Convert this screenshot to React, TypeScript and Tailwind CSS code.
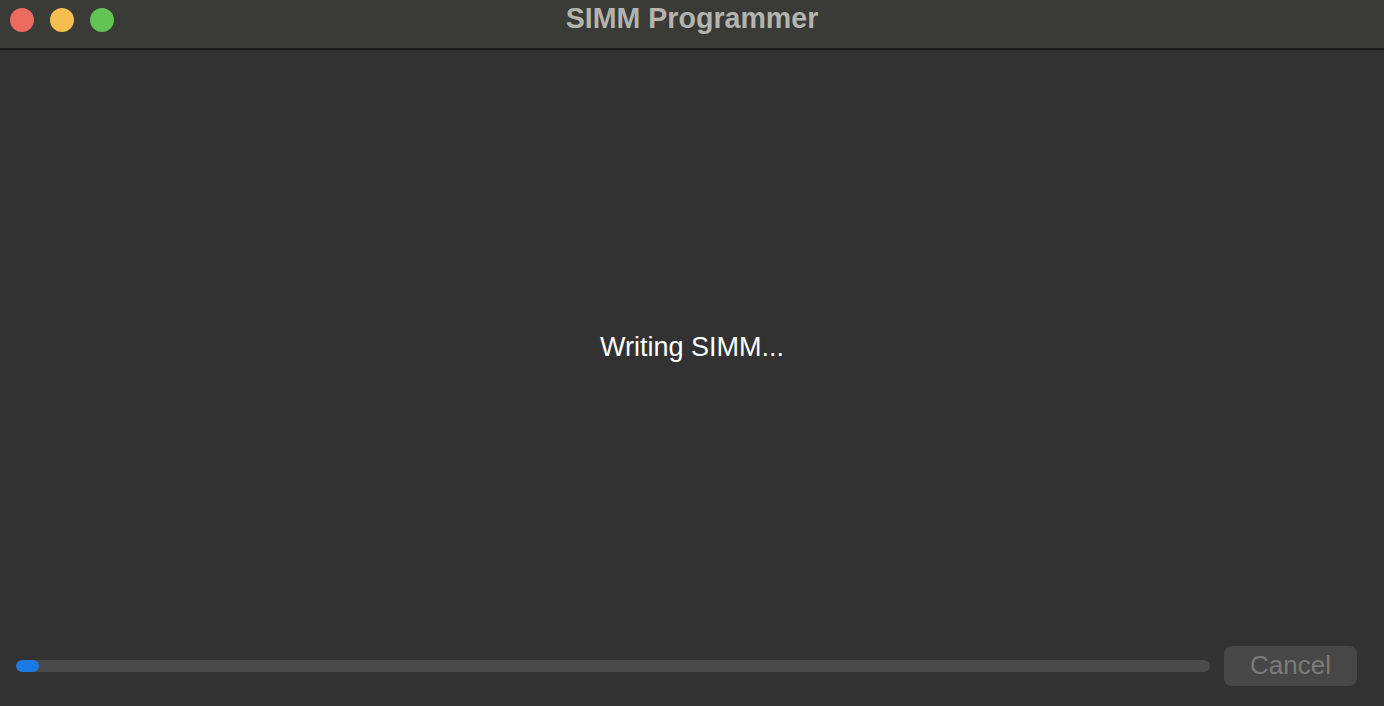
export default function App() {
  return (
    <div
      className="flex h-[706px] w-[1384px] flex-col overflow-hidden bg-[#323232]"
      style={{ fontFamily: '"Liberation Sans", Arial, sans-serif' }}
    >
      {/* Title bar */}
      <div className="relative flex h-[50px] items-center justify-center border-b-2 border-[#1c1c1c] bg-[#3a3a37]">
        <div className="absolute left-[10px] top-[8px] flex gap-[16px]">
          <span className="h-[24px] w-[24px] rounded-full bg-[#ec6b5e]" />
          <span className="h-[24px] w-[24px] rounded-full bg-[#f5bf4f]" />
          <span className="h-[24px] w-[24px] rounded-full bg-[#61c454]" />
        </div>
        <span className="-mt-[11px] text-[28.6px] font-bold text-[#b3b4ae]">
          SIMM Programmer
        </span>
      </div>

      {/* Status */}
      <div className="flex flex-1 items-center justify-center pb-[2px]">
        <span className="text-[27px] text-white">Writing SIMM...</span>
      </div>

      {/* Progress + cancel */}
      <div className="flex items-center gap-[14px] pb-[20px] pl-[16px] pr-[27px]">
        <div className="h-[12px] flex-1 overflow-hidden rounded-full bg-[#4a4a4a]">
          <div className="h-full w-[23px] rounded-full bg-[#1c7ae3]" />
        </div>
        <button className="h-[40px] w-[133px] rounded-[8px] bg-[#474747] pb-[2px] text-[26px] text-[#7b7b7b]">
          Cancel
        </button>
      </div>
    </div>
  );
}
